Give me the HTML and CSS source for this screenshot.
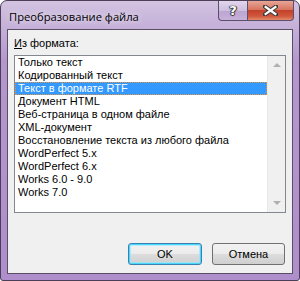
FILE: index.html
```html
<!DOCTYPE html>
<html>

<head>
	<title>Преобразование файла</title>
	<meta charset="UTF-8">
	<link rel="stylesheet" href="styles.css">
</head>

<body>
	<div class="window">
		<div class="titlebar">
			<span class="title">Преобразование файла</span>
			<div class="caption-buttons">
				<div class="cap-btn help">?</div>
				<div class="cap-btn close">
					<svg width="15" height="11" viewBox="0 0 15 11">
						<path d="M2 1.5 L13 9.5 M13 1.5 L2 9.5" stroke="#3a3a3a" stroke-width="4.2" stroke-linecap="square" />
						<path d="M2.6 2 L12.4 9 M12.4 2 L2.6 9" stroke="#ffffff" stroke-width="2.2" stroke-linecap="square" />
					</svg>
				</div>
			</div>
		</div>
		<div class="client">
			<div class="label"><u>И</u>з формата:</div>
			<div class="listbox">
				<ul class="items">
					<li>Только текст</li>
					<li>Кодированный текст</li>
					<li class="selected">Текст в формате RTF</li>
					<li>Документ HTML</li>
					<li>Веб-страница в одном файле</li>
					<li>XML-документ</li>
					<li>Восстановление текста из любого файла</li>
					<li>WordPerfect 5.x</li>
					<li>WordPerfect 6.x</li>
					<li>Works 6.0 - 9.0</li>
					<li>Works 7.0</li>
				</ul>
				<div class="scrollbar">
					<span class="arrow up"></span>
					<span class="arrow down"></span>
				</div>
			</div>
			<div class="buttons">
				<div class="btn default">OK</div>
				<div class="btn">Отмена</div>
			</div>
		</div>
	</div>
</body>

</html>
```

FILE: styles.css
```css
html,
body {
	margin: 0;
	padding: 0;
	background: #ffffff;
}

.window {
	box-sizing: border-box;
	width: 300px;
	height: 281px;
	border: 1px solid #4b3f57;
	border-radius: 7px 7px 3px 3px;
	background: linear-gradient(to bottom, #d3c3e1 0px, #c4afd8 28px, #b597cf 60px, #ae8ecb 100%);
	padding: 0 6px 6px 6px;
	display: flex;
	flex-direction: column;
	font-family: "Liberation Sans", Arial, sans-serif;
}

.titlebar {
	height: 28px;
	display: flex;
	justify-content: space-between;
	align-items: flex-start;
	flex-shrink: 0;
}

.title {
	font-family: "Open Sans", "Noto Sans", sans-serif;
	font-size: 11.2px;
	color: #000000;
	margin: 8px 0 0 2px;
	text-shadow: 0 0 6px rgba(255, 255, 255, 0.9);
}

.caption-buttons {
	display: flex;
	margin-right: -1px;
}

.cap-btn {
	box-sizing: border-box;
	height: 20px;
	border: 1px solid #5d4f6a;
	border-top: none;
	display: flex;
	align-items: center;
	justify-content: center;
}

.help {
	width: 29px;
	border-radius: 0 0 0 4px;
	border-right: none;
	background: linear-gradient(to bottom, #e2d6ec 0%, #cfbfdf 50%, #bba4d0 51%, #c7b2db 100%);
	font-family: "DejaVu Sans", sans-serif;
	font-weight: bold;
	font-size: 13px;
	color: #ffffff;
	text-shadow: 0 0 1px #333, 1px 0 1px #333, -1px 0 1px #333, 0 1px 1px #333;
}

.close {
	width: 47px;
	border-radius: 0 0 4px 0;
	background: linear-gradient(to bottom, #e8a596 0%, #d67560 45%, #c4412b 50%, #d0583c 80%, #e38a6c 100%);
}

.client {
	flex: 1;
	border: 1px solid #5a4e64;
	background: #f0f0f0;
	padding: 7px 6px 0 6px;
	display: flex;
	flex-direction: column;
}

.label {
	font-size: 11px;
	line-height: 13px;
	color: #000000;
	margin-bottom: 5px;
}

.label u {
	text-decoration: underline;
	text-underline-offset: 1px;
}

.listbox {
	box-sizing: border-box;
	height: 158px;
	border: 1px solid #828790;
	background: #ffffff;
	display: flex;
}

.items {
	list-style: none;
	margin: 0;
	padding: 0;
	flex: 1;
	overflow: hidden;
}

.items li {
	box-sizing: border-box;
	height: 13px;
	line-height: 13px;
	font-size: 11px;
	padding-left: 2px;
	white-space: nowrap;
	color: #000000;
	border: 1px solid transparent;
	display: flex;
	align-items: center;
}

.items li.selected {
	background: #3399ff;
	color: #ffffff;
	border: 1px dotted #e3953a;
}

.scrollbar {
	width: 17px;
	background: #f0f0f0;
	border-left: 1px solid #e8e8e8;
	display: flex;
	flex-direction: column;
	justify-content: space-between;
	align-items: center;
	padding: 7px 0 7px 0;
}

.arrow {
	width: 0;
	height: 0;
	border-left: 4px solid transparent;
	border-right: 4px solid transparent;
}

.arrow.up {
	border-bottom: 4px solid #b0b0b0;
}

.arrow.down {
	border-top: 4px solid #b0b0b0;
}

.buttons {
	display: flex;
	justify-content: flex-end;
	gap: 10px;
	margin-top: 30px;
	padding-right: 1px;
}

.btn {
	box-sizing: border-box;
	width: 73px;
	height: 22px;
	border: 1px solid #707070;
	border-radius: 3px;
	background: linear-gradient(to bottom, #f2f2f2 0%, #ebebeb 50%, #dddddd 51%, #cfcfcf 100%);
	font-size: 11px;
	display: flex;
	align-items: center;
	justify-content: center;
	color: #000000;
}

.btn.default {
	width: 74px;
	border-color: #3c7fb1;
	box-shadow: inset 0 0 0 1px #48d8fb, inset 0 0 0 2px rgba(140, 230, 255, 0.6);
}
```
